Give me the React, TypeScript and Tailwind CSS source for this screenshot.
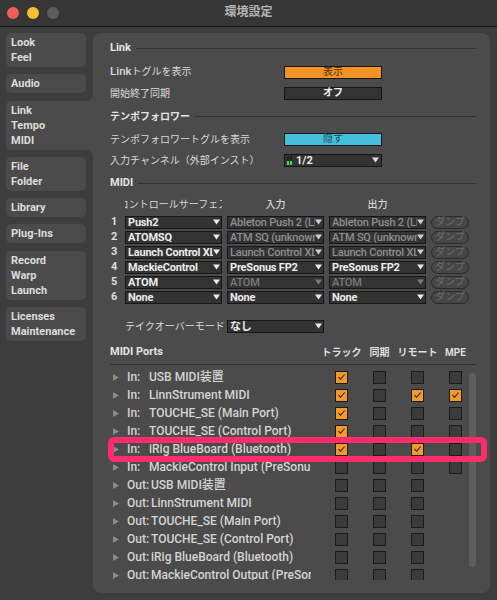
import React from "react";

const Tri = ({ c }: { c: string }) => (
  <svg width="7" height="6" viewBox="0 0 7 6" className="shrink-0">
    <path d="M0 0.5H7L3.5 5.5Z" fill={c} />
  </svg>
);

const Cb = ({ on }: { on?: boolean }) => (
  <div
    className={
      on
        ? "flex h-[13px] w-[13px] items-center justify-center border border-[#1b1b1b] bg-[#f39a2a]"
        : "flex h-[13px] w-[13px] items-center justify-center border border-[#1b1b1b] bg-[#3b3b3b]"
    }
  >
    {on && (
      <svg width="9" height="8" viewBox="0 0 9 8">
        <path d="M1.5 4.2 L3.6 6.3 L7.6 1.5" fill="none" stroke="#2a1c08" strokeWidth="1.1" />
      </svg>
    )}
  </div>
);

const Dd = ({ text, tone, tri }: { text: string; tone: string; tri: string }) => (
  <div className="flex h-[13px] w-[97px] shrink-0 items-center border border-[#161616] bg-[#333333] pl-[2px] pr-[1px]">
    <span className={"flex-1 overflow-hidden whitespace-nowrap text-[11px] leading-none tracking-[-0.2px] " + tone}>{text}</span>
    <Tri c={tri} />
  </div>
);

const Dump = () => (
  <div className="ml-[5px] flex h-[13px] w-[38px] items-center justify-center rounded-full border border-[#2b2b2b] bg-[#474747] text-[10px] leading-none text-[#6a6a6a]">
    ダンプ
  </div>
);

const Header = ({ children }: { children: React.ReactNode }) => (
  <div className="flex h-[21px] items-center gap-[5px]">
    <span className="text-[11px] font-bold text-[#e4e4e4]">{children}</span>
    <div className="h-px flex-1 bg-[#333333]" />
  </div>
);

const W = "text-[#ececec] font-bold";
const G = "text-[#8e8e8e] font-medium";
const G2 = "text-[#7a7a7a] font-medium";

const rows: [string, string, string, string, string][] = [
  ["1", "Push2", "Ableton Push 2 (Live Port)", G, "#cfcfcf"],
  ["2", "ATOMSQ", "ATM SQ (unknown)", G, "#cfcfcf"],
  ["3", "Launch Control XL", "Launch Control XL", G, "#cfcfcf"],
  ["4", "MackieControl", "PreSonus FP2", W, "#ececec"],
  ["5", "ATOM", "ATOM", G2, "#7a7a7a"],
  ["6", "None", "None", W, "#ececec"],
];

const ports: [string, string, number[]][] = [
  ["In:", "USB MIDI装置", [1, 0, 0, 0]],
  ["In:", "LinnStrument MIDI", [1, 0, 1, 1]],
  ["In:", "TOUCHE_SE (Main Port)", [1, 0, 0, 0]],
  ["In:", "TOUCHE_SE (Control Port)", [1, 0, 0, 0]],
  ["In:", "iRig BlueBoard (Bluetooth)", [1, 0, 1, 0]],
  ["In:", "MackieControl Input (PreSonus FP2)", [0, 0, 0, 0]],
  ["Out:", "USB MIDI装置", [0, 0, 0]],
  ["Out:", "LinnStrument MIDI", [0, 0, 0]],
  ["Out:", "TOUCHE_SE (Main Port)", [0, 0, 0]],
  ["Out:", "TOUCHE_SE (Control Port)", [0, 0, 0]],
  ["Out:", "iRig BlueBoard (Bluetooth)", [0, 0, 0]],
  ["Out:", "MackieControl Output (PreSonus FP2)", [0, 0, 0]],
];

const side: { lines: string[]; sel?: boolean }[] = [
  { lines: ["Look", "Feel"] },
  { lines: ["Audio"] },
  { lines: ["Link", "Tempo", "MIDI"], sel: true },
  { lines: ["File", "Folder"] },
  { lines: ["Library"] },
  { lines: ["Plug-Ins"] },
  { lines: ["Record", "Warp", "Launch"] },
  { lines: ["Licenses", "Maintenance"] },
];

export default function App() {
  return (
    <div className="relative flex h-[600px] w-[497px] flex-col overflow-hidden bg-[#3d3d3d] font-['Roboto','Noto_Sans_CJK_JP',sans-serif] text-[#d9d9d9]">
      {/* title bar */}
      <div className="grid h-[27px] shrink-0 grid-cols-[1fr_auto_1fr] items-center border-b border-[#111111] bg-[#363636]">
        <div className="flex items-center gap-[8px] pl-[7px]">
          <div className="h-[12px] w-[12px] rounded-full bg-[#ed5f57]" />
          <div className="h-[12px] w-[12px] rounded-full bg-[#f5bf2f]" />
          <div className="h-[12px] w-[12px] rounded-full bg-[#5c5c5c]" />
        </div>
        <div className="mb-[3px] text-[12px] font-bold text-[#b4b4b4]">環境設定</div>
        <div />
      </div>

      <div className="flex min-h-0 flex-1">
        {/* sidebar */}
        <div className="flex w-[93px] shrink-0 flex-col gap-[7.3px] pl-[6px] pt-[6px]">
          {side.map((s, i) => (
            <div
              key={i}
              className={
                s.sel
                  ? "relative w-[87px] rounded-l-[5px] bg-[#4b4b4b] px-[5px] py-[2px] text-[11px] leading-[15px] font-bold text-[#dcdcdc]"
                  : "w-[80px] rounded-[5px] bg-[#4b4b4b] px-[5px] py-[2px] text-[11px] leading-[15px] font-bold text-[#dcdcdc]"
              }
            >
              {s.lines.map((l) => (
                <div key={l}>{l}</div>
              ))}
              {s.sel && (
                <>
                  <div className="absolute right-0 top-[-7px] h-[7px] w-[7px] bg-[#4b4b4b]">
                    <div className="h-full w-full rounded-br-[7px] bg-[#3d3d3d]" />
                  </div>
                  <div className="absolute right-0 bottom-[-7px] h-[7px] w-[7px] bg-[#4b4b4b]">
                    <div className="h-full w-full rounded-tr-[7px] bg-[#3d3d3d]" />
                  </div>
                </>
              )}
            </div>
          ))}
        </div>

        {/* panel */}
        <div className="mb-[7px] mr-[7px] mt-[6px] flex-1 rounded-[8px] bg-[#4b4b4b] pl-[17px] pr-[14px] pt-[4.5px]">
          <Header>Link</Header>
          <div className="mt-[3px] flex h-[21px] items-center">
            <span className="w-[174px] text-[10px]">
              <span className="text-[11.5px] font-medium">Link</span>トグルを表示
            </span>
            <div className="flex h-[13px] w-[98px] items-center justify-center border border-[#161616] bg-[#f39323] text-[10px] leading-none text-[#4a2a05]">
              表示
            </div>
          </div>
          <div className="flex h-[21px] items-center">
            <span className="w-[174px] text-[10px]">開始終了同期</span>
            <div className="flex h-[13px] w-[98px] items-center justify-center border border-[#161616] bg-[#333333] text-[10px] leading-none font-bold text-[#f2f2f2]">
              オフ
            </div>
          </div>

          <div className="mt-[2px]">
            <div className="flex h-[21px] items-center gap-[5px]">
              <span className="text-[10px] font-bold text-[#e4e4e4]">テンポフォロワー</span>
              <div className="h-px flex-1 bg-[#333333]" />
            </div>
          </div>
          <div className="mt-[2px] flex h-[21px] items-center">
            <span className="w-[174px] text-[10px]">テンポフォロワートグルを表示</span>
            <div className="flex h-[13px] w-[98px] items-center justify-center border border-[#161616] bg-[#45bfdc] text-[10px] leading-none text-[#1c4a56]">
              隠す
            </div>
          </div>
          <div className="flex h-[21px] items-center">
            <span className="w-[174px] whitespace-nowrap text-[10px]">入力チャンネル（外部インスト）</span>
            <div className="flex h-[13px] w-[98px] items-center border border-[#161616] bg-[#333333] pl-[2px] pr-[2px]">
              <div className="flex h-[9px] gap-[1px]">
                <div className="flex w-[2px] flex-col">
                  <div className="flex-1 bg-[#222222]" />
                  <div className="h-[4px] bg-[#3ee23e]" />
                </div>
                <div className="flex w-[2px] flex-col">
                  <div className="flex-1 bg-[#222222]" />
                  <div className="h-[4px] bg-[#3ee23e]" />
                </div>
              </div>
              <span className="ml-[4px] flex-1 text-[11px] leading-none font-bold text-[#ececec]">1/2</span>
              <Tri c="#dcdcdc" />
            </div>
          </div>

          <div className="mt-[2px]">
            <Header>MIDI</Header>
          </div>
          <div className="flex h-[21px] items-center text-[10px] text-[#d6d6d6]">
            <div className="w-[15px] shrink-0" />
            <div className="flex w-[97px] shrink-0 justify-center overflow-hidden">
              <span className="shrink-0 whitespace-nowrap">コントロールサーフェス</span>
            </div>
            <div className="ml-[5px] w-[97px] shrink-0 text-center font-medium">入力</div>
            <div className="ml-[5px] w-[97px] shrink-0 text-center font-medium">出力</div>
          </div>
          {rows.map(([n, cs, io, tone, tri]) => (
            <div key={n} className="flex h-[15px] items-center">
              <span className="w-[15px] shrink-0 pl-[1px] text-[11px] font-bold text-[#dedede]">{n}</span>
              <Dd text={cs} tone={W} tri="#ececec" />
              <div className="ml-[5px]">
                <Dd text={io} tone={tone} tri={tri} />
              </div>
              <div className="ml-[5px]">
                <Dd text={io} tone={tone} tri={tri} />
              </div>
              <Dump />
            </div>
          ))}

          <div className="mt-[11px] flex h-[21px] items-center">
            <span className="ml-[15px] w-[102px] shrink-0 whitespace-nowrap text-[10px]">テイクオーバーモード</span>
            <Dd text="なし" tone={W} tri="#ececec" />
          </div>

          <div className="mt-[5px] flex h-[23px] items-center border-b border-[#323232]">
            <span className="w-[212.5px] shrink-0 text-[11px] font-bold text-[#e4e4e4]">MIDI Ports</span>
            {["トラック", "同期", "リモート", "MPE"].map((h) => (
              <div key={h} className="flex w-[38px] shrink-0 justify-center">
                <span className="whitespace-nowrap text-[10px] font-bold text-[#dedede]">{h}</span>
              </div>
            ))}
          </div>

          <div className="relative h-[215.5px] overflow-hidden pt-[3.5px]">
            {ports.map(([k, name, cbs], i) => (
              <div key={i} className="flex h-[18px] items-center text-[12px] font-medium text-[#d4d4d4]">
                <svg width="6" height="7" viewBox="0 0 6 7" className="ml-[3px] shrink-0">
                  <path d="M0 0L6 3.5L0 7Z" fill="#8a8a8a" />
                </svg>
                {k === "In:" ? (
                  <>
                    <span className="ml-[8px] w-[22px] shrink-0">In:</span>
                    <span className="w-[162px] shrink-0 overflow-hidden whitespace-nowrap">{name}</span>
                  </>
                ) : (
                  <>
                    <span className="ml-[8px] w-[24px] shrink-0">Out:</span>
                    <span className="w-[160px] shrink-0 overflow-hidden whitespace-nowrap">{name}</span>
                  </>
                )}
                <div className="w-[11.5px] shrink-0" />
                {cbs.map((c, j) => (
                  <div key={j} className="flex w-[38px] shrink-0 justify-center">
                    <Cb on={c === 1} />
                  </div>
                ))}
              </div>
            ))}
            <div className="absolute right-0 top-[8.5px] h-[194px] w-[7px] rounded-full bg-[#5e5e5e]" />
          </div>
        </div>
      </div>

      {/* highlight annotation */}
      <div className="absolute left-[108px] top-[437px] h-[25px] w-[379px] rounded-[6px] border-[6px] border-[#fd2c6c]" />
    </div>
  );
}
